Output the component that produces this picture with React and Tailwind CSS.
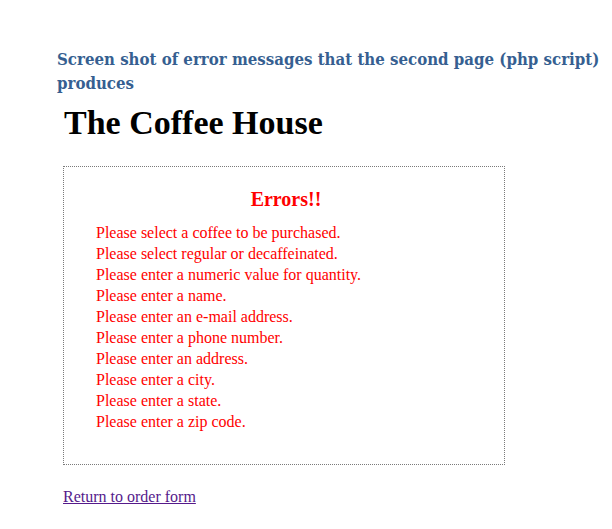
export default function App() {
  const errors = [
    "Please select a coffee to be purchased.",
    "Please select regular or decaffeinated.",
    "Please enter a numeric value for quantity.",
    "Please enter a name.",
    "Please enter an e-mail address.",
    "Please enter a phone number.",
    "Please enter an address.",
    "Please enter a city.",
    "Please enter a state.",
    "Please enter a zip code.",
  ];
  return (
    <div className="w-[612px] h-[529px] bg-white overflow-hidden font-['Liberation_Serif',serif]">
      <div className="pl-[57px] pt-[47px] pr-[2px]">
        <p className="font-['DejaVu_Serif_Condensed','DejaVu_Serif',serif] text-[16.7px] leading-[24px] font-bold text-[#365f91]">
          Screen shot of error messages that the second page (php script) produces
        </p>
      </div>
      <div className="pl-[64px] pt-[8px]">
        <h1 className="text-[34px] leading-[40px] font-bold text-black">The Coffee House</h1>
      </div>
      <div className="ml-[63px] mt-[23px] w-[442px] h-[299px] border border-dotted border-[#7a7a7a] pt-[20px]">
        <h2 className="text-center text-[20px] leading-[24px] font-bold text-[#ff0000] pl-[4px]">Errors!!</h2>
        <ul className="mt-[11px] pl-[32px] text-[16px] leading-[21px] text-[#ff0000]">
          {errors.map((e) => (
            <li key={e}>{e}</li>
          ))}
        </ul>
      </div>
      <div className="pl-[63px] mt-[20px]">
        <a href="#" className="text-[16px] leading-[20px] text-[#551a8b] underline">Return to order form</a>
      </div>
    </div>
  );
}
